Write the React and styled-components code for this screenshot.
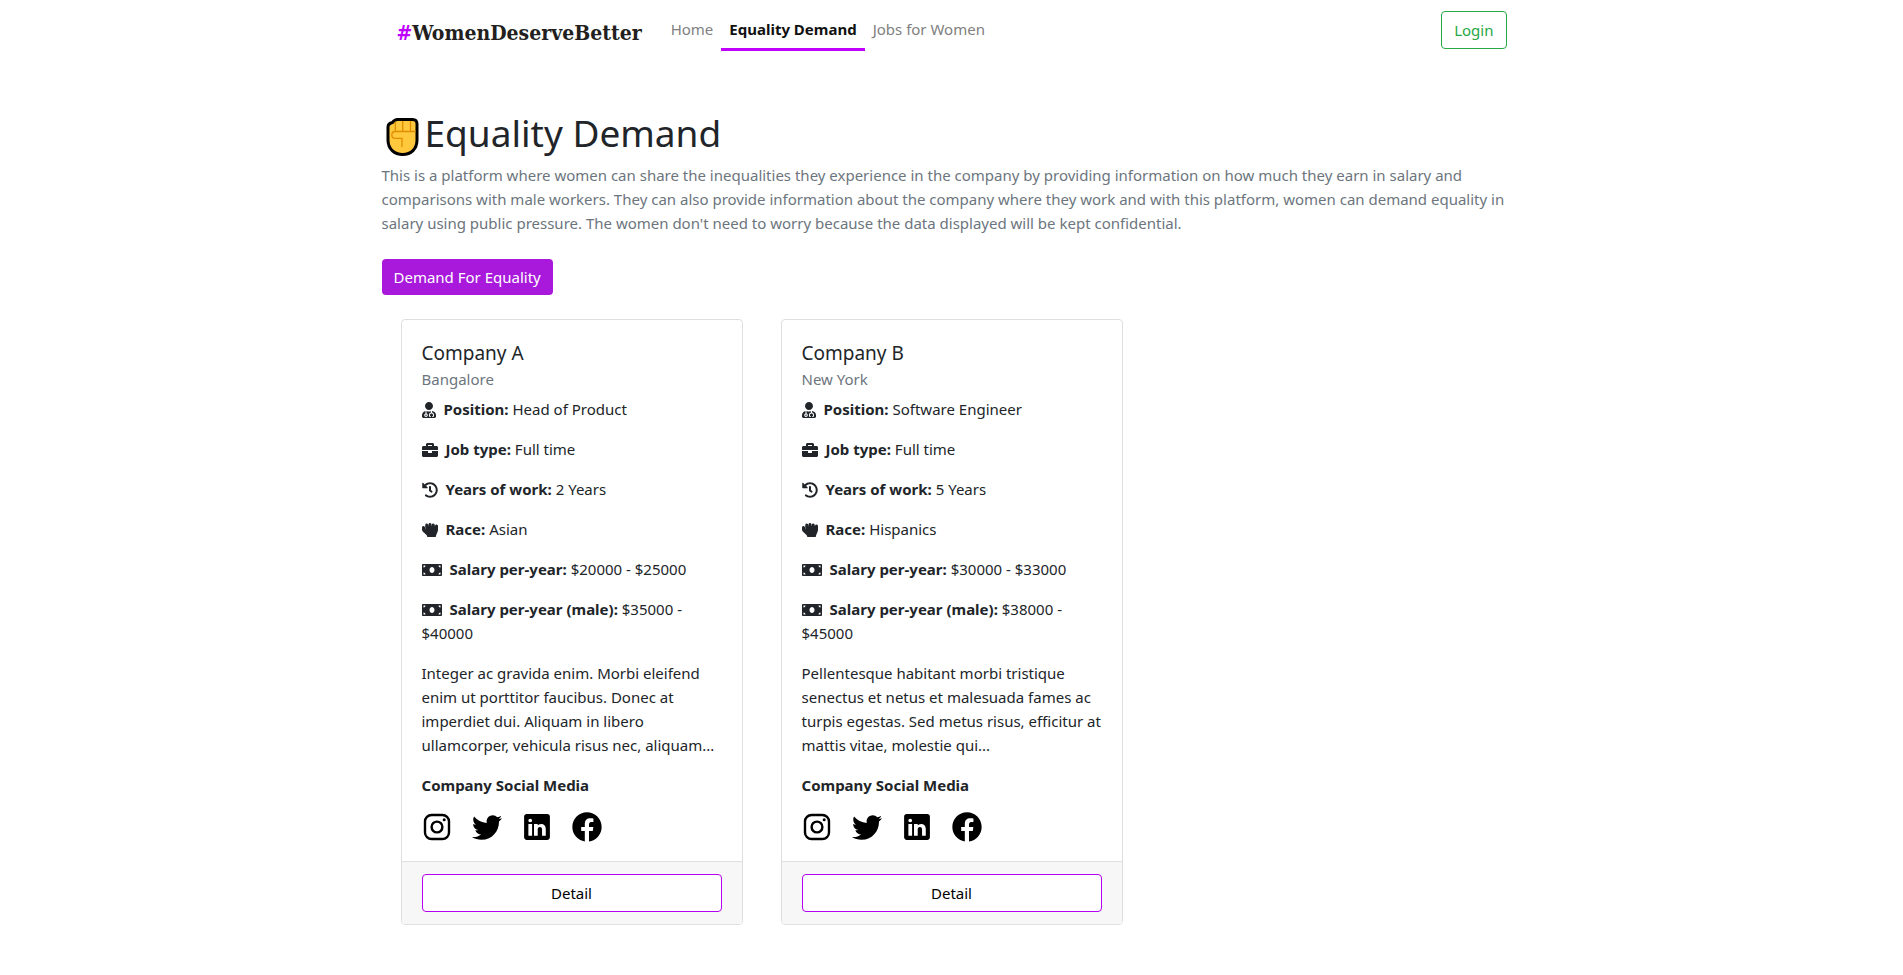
import React from "react";
import styled, { createGlobalStyle } from "styled-components";
import { FaUserMd, FaBriefcase, FaHistory, FaHandRock, FaMoneyBill } from "react-icons/fa";

const Global = createGlobalStyle`
  *, *::before, *::after { box-sizing: border-box; }
  body {
    margin: 0;
    background: #fff;
    color: #212529;
    font: 400 15px/24px "Noto Sans", "Open Sans", sans-serif;
  }
`;

const Container = styled.div`
  width: 100%;
  max-width: 1140px;
  margin: 0 auto;
`;

const Navbar = styled.nav`
  display: flex;
  align-items: flex-start;
  padding: 11px 15px 8px;
`;

const Brand = styled.a`
  margin-right: 21px;
  padding-top: 10px;
  color: #231f20;
  font: 700 21px/24px "DejaVu Serif Condensed", "DejaVu Serif", serif;
  text-decoration: none;
  span { color: #bf00ff; }
`;

const NavLinks = styled.ul`
  display: flex;
  flex: 1;
  margin: 0;
  padding: 0;
  list-style: none;
`;

const NavLink = styled.a`
  display: block;
  padding: 6px 8px 7px;
  border-bottom: 3px solid ${(p) => (p.$active ? "#bf00ff" : "transparent")};
  color: ${(p) => (p.$active ? "#111" : "#808080")};
  font-weight: ${(p) => (p.$active ? 700 : 400)};
  text-decoration: none;
`;

const Button = styled.button`
  display: block;
  width: ${(p) => (p.$block ? "100%" : "auto")};
  padding: 6px 12px;
  border: ${(p) => (p.$border ? `1px solid ${p.$border}` : "0")};
  border-radius: 4px;
  background: ${(p) => p.$fill || "transparent"};
  color: ${(p) => p.$color};
  font: inherit;
  cursor: pointer;
`;

const Main = styled.main`
  padding-top: 50px;
`;

const Title = styled.h1`
  display: flex;
  align-items: center;
  margin: 0 0 6px;
  font-size: 37px;
  font-weight: 400;
  line-height: 48px;
`;

const Lead = styled.p`
  margin: 0 0 24px;
  color: #6c757d;
`;

const Cards = styled.div`
  display: grid;
  grid-template-columns: repeat(3, 1fr);
`;

const Card = styled.article`
  margin: 24px 19px;
  border: 1px solid #dfdfdf;
  border-radius: 4px;
  overflow: hidden;
`;

const CardBody = styled.div`
  padding: 20px 20px 19px;
`;

const CardTitle = styled.h2`
  margin: 0 0 3px;
  font-size: 19px;
  font-weight: 400;
  line-height: 26px;
`;

const CardPlace = styled.h3`
  margin: 0 0 8px;
  color: #6c757d;
  font-size: 15px;
  font-weight: 400;
  line-height: 20px;
`;

const Text = styled.p`
  margin: 0 0 16px;
`;

const SocialHeading = styled.h4`
  margin: 0 0 15px;
  font-size: 15px;
  font-weight: 700;
  line-height: 24px;
`;

const RowIcon = styled.span`
  display: inline-block;
  width: ${(p) => p.$width || 16}px;
  height: 16px;
  margin-right: 8px;
  vertical-align: -3px;
  svg { display: block; width: 100%; height: 100%; }
`;

const Socials = styled.div`
  display: flex;
  gap: 20px;
  a { height: 30px; color: #000; }
  svg { display: block; width: 30px; height: 30px; fill: currentColor; }
`;

const CardFooter = styled.footer`
  padding: 12px 20px;
  border-top: 1px solid #dfdfdf;
  background: #f7f7f7;
`;

const Fist = () => (
  <svg width="43" height="48" viewBox="0 0 43 48" aria-hidden="true">
    <path
      d="M15.5 10.5H30.500Q35 10.500 35 15V31C35 40 29 45.500 20.700 45.500S6 40 6 31V18Q6 14.500 10.500 13.500Q12.500 10.500 15.500 10.500Z"
      fill="#ffc83d" stroke="#000" strokeWidth="3"
    />
    <path
      d="M13.300 13V22M20.700 12V22M28.500 12V22M33.500 22.500H13C8.800 22.500 8.800 29.300 13 29.300H20V38"
      fill="none" stroke="#e08e00" strokeWidth="1.300"
    />
  </svg>
);

const Instagram = () => (
  <svg viewBox="0 0 50 50">
    <rect x="5" y="5" width="40" height="40" rx="11" fill="none" stroke="currentColor" strokeWidth="4" />
    <circle cx="25" cy="25" r="9" fill="none" stroke="currentColor" strokeWidth="4" />
    <circle cx="37" cy="13" r="2.500" />
  </svg>
);

const Twitter = () => (
  <svg viewBox="0 0 50 50">
    <path d="M50.060 10.440C48.210 11.260 46.230 11.810 44.150 12.060C46.280 10.790 47.910 8.770 48.680 6.370C46.690 7.550 44.480 8.400 42.140 8.860C40.270 6.860 37.600 5.620 34.640 5.620C28.960 5.620 24.360 10.220 24.360 15.900C24.360 16.700 24.450 17.490 24.630 18.240C16.080 17.810 8.500 13.720 3.430 7.500C2.540 9.020 2.040 10.790 2.040 12.670C2.040 16.230 3.850 19.380 6.610 21.230C4.930 21.180 3.340 20.710 1.950 19.940V20.070C1.950 25.050 5.500 29.210 10.200 30.160C9.340 30.390 8.430 30.520 7.490 30.520C6.830 30.520 6.180 30.450 5.550 30.330C6.870 34.410 10.660 37.390 15.160 37.470C11.640 40.230 7.210 41.870 2.390 41.870C1.560 41.870 0.740 41.820 -0.060 41.730C4.490 44.650 9.890 46.350 15.700 46.350C34.620 46.350 44.960 30.680 44.960 17.090C44.960 16.650 44.950 16.200 44.930 15.760C46.940 14.310 48.680 12.500 50.060 10.440Z" />
  </svg>
);

const LinkedIn = () => (
  <svg viewBox="0 0 50 50">
    <path transform="translate(3.500 3.500) scale(.86)" d="M45 0H5C2.240 0 0 2.240 0 5V45C0 47.760 2.240 50 5 50H45C47.760 50 50 47.760 50 45V5C50 2.240 47.760 0 45 0ZM15.500 19V42H8.300V19ZM8.300 12.500C8.300 10.800 9.700 9 11.900 9S15.500 10.800 15.500 12.500C15.500 14.200 14.100 15.700 11.900 15.700S8.300 14.200 8.300 12.500ZM42 42H34.800V30C34.800 27.600 33.600 25.200 30.600 25.200S26.400 27.700 26.400 30V42H19.200V19H26.400V22C26.400 22 28.700 19 33.400 19C38.100 19 42 22.300 42 28.900Z" />
  </svg>
);

const Facebook = () => (
  <svg viewBox="2.500 2.500 45 45">
    <path d="M25 3C12.850 3 3 12.850 3 25C3 36.030 11.125 45.137 21.712 46.728V30.831H16.269V25.048H21.712V21.200C21.712 14.829 24.816 12.032 30.111 12.032C32.647 12.032 33.988 12.220 34.623 12.306V17.354H31.011C28.763 17.354 27.978 19.485 27.978 21.887V25.048H34.566L33.672 30.831H27.978V46.775C38.716 45.318 47 36.137 47 25C47 12.850 37.150 3 25 3Z" />
  </svg>
);

const socials = [
  ["Instagram", Instagram],
  ["Twitter", Twitter],
  ["LinkedIn", LinkedIn],
  ["Facebook", Facebook],
];

const companies = [
  {
    name: "Company A",
    place: "Bangalore",
    position: "Head of Product",
    years: "2 Years",
    race: "Asian",
    salary: "$20000 - $25000",
    male: "$35000 - $40000",
    text: "Integer ac gravida enim. Morbi eleifend enim ut porttitor faucibus. Donec at imperdiet dui. Aliquam in libero ullamcorper, vehicula risus nec, aliquam...",
  },
  {
    name: "Company B",
    place: "New York",
    position: "Software Engineer",
    years: "5 Years",
    race: "Hispanics",
    salary: "$30000 - $33000",
    male: "$38000 - $45000",
    text: "Pellentesque habitant morbi tristique senectus et netus et malesuada fames ac turpis egestas. Sed metus risus, efficitur at mattis vitae, molestie qui...",
  },
];

const Row = ({ icon: Icon, width, label, children }) => (
  <Text>
    <RowIcon $width={width}><Icon /></RowIcon>
    <b>{label}:</b> {children}
  </Text>
);

const CompanyCard = ({ company: c }) => (
  <Card>
    <CardBody>
      <CardTitle>{c.name}</CardTitle>
      <CardPlace>{c.place}</CardPlace>
      <Row icon={FaUserMd} width={14} label="Position">{c.position}</Row>
      <Row icon={FaBriefcase} label="Job type">Full time</Row>
      <Row icon={FaHistory} label="Years of work">{c.years}</Row>
      <Row icon={FaHandRock} label="Race">{c.race}</Row>
      <Row icon={FaMoneyBill} width={20} label="Salary per-year">{c.salary}</Row>
      <Row icon={FaMoneyBill} width={20} label="Salary per-year (male)">{c.male}</Row>
      <Text>{c.text}</Text>
      <SocialHeading>Company Social Media</SocialHeading>
      <Socials>
        {socials.map(([name, Icon]) => (
          <a key={name} href="#" aria-label={name}><Icon /></a>
        ))}
      </Socials>
    </CardBody>
    <CardFooter>
      <Button $block $border="#b300f0" $fill="#fff" $color="#000">Detail</Button>
    </CardFooter>
  </Card>
);

export default function App() {
  return (
    <>
      <Global />
      <Container>
        <Navbar>
          <Brand href="#"><span>#</span>WomenDeserveBetter</Brand>
          <NavLinks>
            <li><NavLink href="#">Home</NavLink></li>
            <li><NavLink href="#" $active>Equality Demand</NavLink></li>
            <li><NavLink href="#">Jobs for Women</NavLink></li>
          </NavLinks>
          <Button $border="#28a745" $color="#28a745">Login</Button>
        </Navbar>
        <Main>
          <Title><Fist />Equality Demand</Title>
          <Lead>
            This is a platform where women can share the inequalities they experience in the company by providing information on how much they earn in salary and comparisons with male workers. They can also provide information about the company where they work and with this platform, women can demand equality in salary using public pressure. The women don't need to worry because the data displayed will be kept confidential.
          </Lead>
          <Button $fill="#a819db" $color="#fff">Demand For Equality</Button>
          <Cards>
            {companies.map((c) => <CompanyCard key={c.name} company={c} />)}
          </Cards>
        </Main>
      </Container>
    </>
  );
}
